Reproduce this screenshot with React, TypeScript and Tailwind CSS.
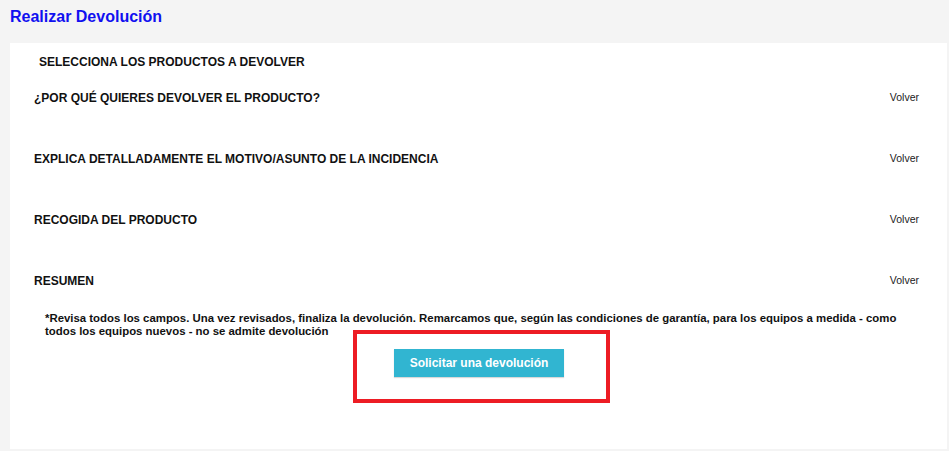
const sections = [
  '¿POR QUÉ QUIERES DEVOLVER EL PRODUCTO?',
  'EXPLICA DETALLADAMENTE EL MOTIVO/ASUNTO DE LA INCIDENCIA',
  'RECOGIDA DEL PRODUCTO',
  'RESUMEN',
];

function SectionRow({ title }: { title: string }) {
  return (
    <div className="flex h-[61px] items-start justify-between pr-[28px]">
      <h3 className="text-[12px] font-bold leading-[14px] text-[#111]">{title}</h3>
      <button type="button" className="-mt-[1px] text-[10.5px] leading-[14px] text-[#222]">
        Volver
      </button>
    </div>
  );
}

export default function App() {
  return (
    <div
      className="h-[451px] w-[949px] overflow-hidden bg-[#f4f4f4] pl-[10px] pr-[2px]"
      style={{ fontFamily: '"Liberation Sans", Arial, sans-serif' }}
    >
      <h1 className="pt-[7px] text-[16px] font-bold leading-[19px] text-[#1010f0]">Realizar Devolución</h1>

      <div className="mt-[17px] h-[406px] bg-white pl-[24px] pt-[12px]">
        <h2 className="pl-[5px] text-[12px] font-bold leading-[14px] text-[#111]">
          SELECCIONA LOS PRODUCTOS A DEVOLVER
        </h2>

        <div className="mt-[22px]">
          {sections.map((s) => (
            <SectionRow key={s} title={s} />
          ))}
        </div>

        <div className="-mt-[23px] pl-[11px] pr-[40px]">
          <p className="text-[11.4px] font-bold leading-[13px] text-[#111]">
            *Revisa todos los campos. Una vez revisados, finaliza la devolución. Remarcamos que, según las
            condiciones de garantía, para los equipos a medida - como todos los equipos nuevos - no se admite
            devolución
          </p>
        </div>

        <div className="-mt-[8px] flex justify-center pr-[18px]">
          <div className="border-4 border-[#ed1c24] pb-[22px] pl-[37px] pr-[42px] pt-[15px]">
            <button
              type="button"
              className="h-[28px] w-[170px] bg-[#31b5d1] text-[12px] font-bold text-white shadow-[0_1px_1px_rgba(0,0,0,0.15)]"
            >
              Solicitar una devolución
            </button>
          </div>
        </div>
      </div>
    </div>
  );
}
